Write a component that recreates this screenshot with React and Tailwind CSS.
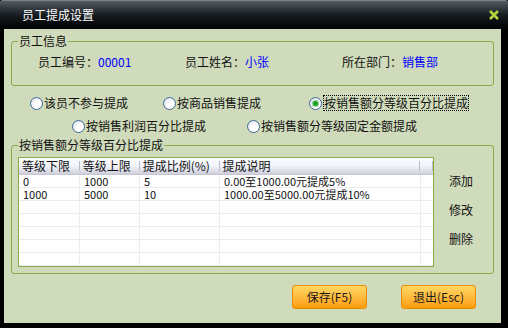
import React from "react";

const rows = [
  ["0", "1000", "5", "0.00至1000.00元提成5%"],
  ["1000", "5000", "10", "1000.00至5000.00元提成10%"],
  ["", "", "", ""],
  ["", "", "", ""],
  ["", "", "", ""],
  ["", "", "", ""],
  ["", "", "", ""],
];

const cols = ["w-[61px]", "w-[60px]", "w-[80px]", "w-[201px]"];
const heads = ["等级下限", "等级上限", "提成比例(%)", "提成说明"];

function Radio({ checked, children, focus }) {
  return (
    <div className="flex items-center h-[16px]">
      <span className="w-[13px] h-[13px] rounded-full border border-[#3f6a9c] bg-[radial-gradient(circle_at_65%_65%,#ffffff_35%,#cfd6e2_100%)] flex items-center justify-center mr-[1px]">
        {checked && <span className="w-[5px] h-[5px] rounded-full bg-[#22a22a] ring-1 ring-[#8fd08f]" />}
      </span>
      <span className={focus ? "border border-dotted border-black leading-[14px]" : ""}>{children}</span>
    </div>
  );
}

export default function App() {
  return (
    <div className="w-[508px] h-[328px] bg-black flex flex-col font-['Noto_Sans_CJK_SC',sans-serif] text-[12px] leading-[16px] text-[#111]">
      {/* title bar */}
      <div className="h-[29px] shrink-0 flex items-center justify-between pl-[22px] pr-[9px] bg-gradient-to-b from-[#545c62] via-[#181d21] to-[#020304] border-t border-[#7a8288] rounded-t-[3px]">
        <span className="text-white">员工提成设置</span>
        <svg width="10" height="10" viewBox="0 0 10 10">
          <path d="M1 1 L9 9 M9 1 L1 9" stroke="#b3d43a" strokeWidth="2.6" />
        </svg>
      </div>

      {/* body */}
      <div className="ml-[4px] mr-[7px] h-[294px] bg-[#cfdbbb] flex flex-col">
        <fieldset className="ml-[7px] mt-[4px] w-[483px] h-[53px] border border-[#8aab46] rounded-[3px]">
          <legend className="ml-[6px] px-[1px] leading-[16px]">员工信息</legend>
          <div className="flex pl-[26px] pt-[5px]">
            <div className="w-[147px]">员工编号：<span className="text-[#0000ff]">00001</span></div>
            <div className="w-[157px]">员工姓名：<span className="text-[#0000ff]">小张</span></div>
            <div>所在部门：<span className="text-[#0000ff]">销售部</span></div>
          </div>
        </fieldset>

        <div className="flex pl-[26px] mt-[9px]">
          <div className="w-[133px]"><Radio>该员不参与提成</Radio></div>
          <div className="w-[146px]"><Radio>按商品销售提成</Radio></div>
          <Radio checked focus>按销售额分等级百分比提成</Radio>
        </div>
        <div className="flex pl-[68px] mt-[7px]">
          <div className="w-[175px]"><Radio>按销售利润百分比提成</Radio></div>
          <Radio>按销售额分等级固定金额提成</Radio>
        </div>

        <fieldset className="ml-[7px] mt-[3px] w-[483px] h-[137px] border border-[#8aab46] rounded-[3px]">
          <legend className="ml-[6px] px-[1px] leading-[16px]">按销售额分等级百分比提成</legend>
          <div className="flex pl-[6px] pt-[4px]">
            <div className="w-[416px] h-[110px] border border-[#8aab46] bg-white flex flex-col overflow-hidden">
              <div className="h-[17px] shrink-0 flex items-center bg-gradient-to-b from-[#fbfcff] via-[#f2f4fa] to-[#cfd0dc] border-b border-[#c4c6d4]">
                {heads.map((h, i) => (
                  <div key={h} className={`${cols[i]} flex items-center justify-between pl-[3px]`}>
                    <span>{h}</span>
                    <span className="w-px h-[10px] bg-[#b9bcc6]" />
                  </div>
                ))}
                <div className="w-[13px] flex justify-end">
                  <span className="w-px h-[10px] bg-[#b9bcc6]" />
                </div>
              </div>
              {rows.map((r, ri) => (
                <div key={ri} className="h-[13px] shrink-0 flex border-b border-[#ececec] leading-[12px]">
                  {r.map((c, ci) => (
                    <div key={ci} className={`${cols[ci]} border-r border-[#ececec] pl-[4px] text-[11px] whitespace-nowrap`}>{c}</div>
                  ))}
                </div>
              ))}
            </div>
            <div className="flex flex-col pl-[15px] pt-[16px] gap-[13px]">
              <span>添加</span>
              <span>修改</span>
              <span>删除</span>
            </div>
          </div>
        </fieldset>

        <div className="flex justify-end gap-[34px] pr-[25px] mt-[11px]">
          <button className="w-[75px] h-[24px] rounded-[3px] border border-[#e58c00] bg-gradient-to-b from-[#ffd860] to-[#ff9c00] text-[#1a1a1a]">保存(F5)</button>
          <button className="w-[75px] h-[24px] rounded-[3px] border border-[#e58c00] bg-gradient-to-b from-[#ffd860] to-[#ff9c00] text-[#1a1a1a]">退出(Esc)</button>
        </div>
      </div>
    </div>
  );
}
